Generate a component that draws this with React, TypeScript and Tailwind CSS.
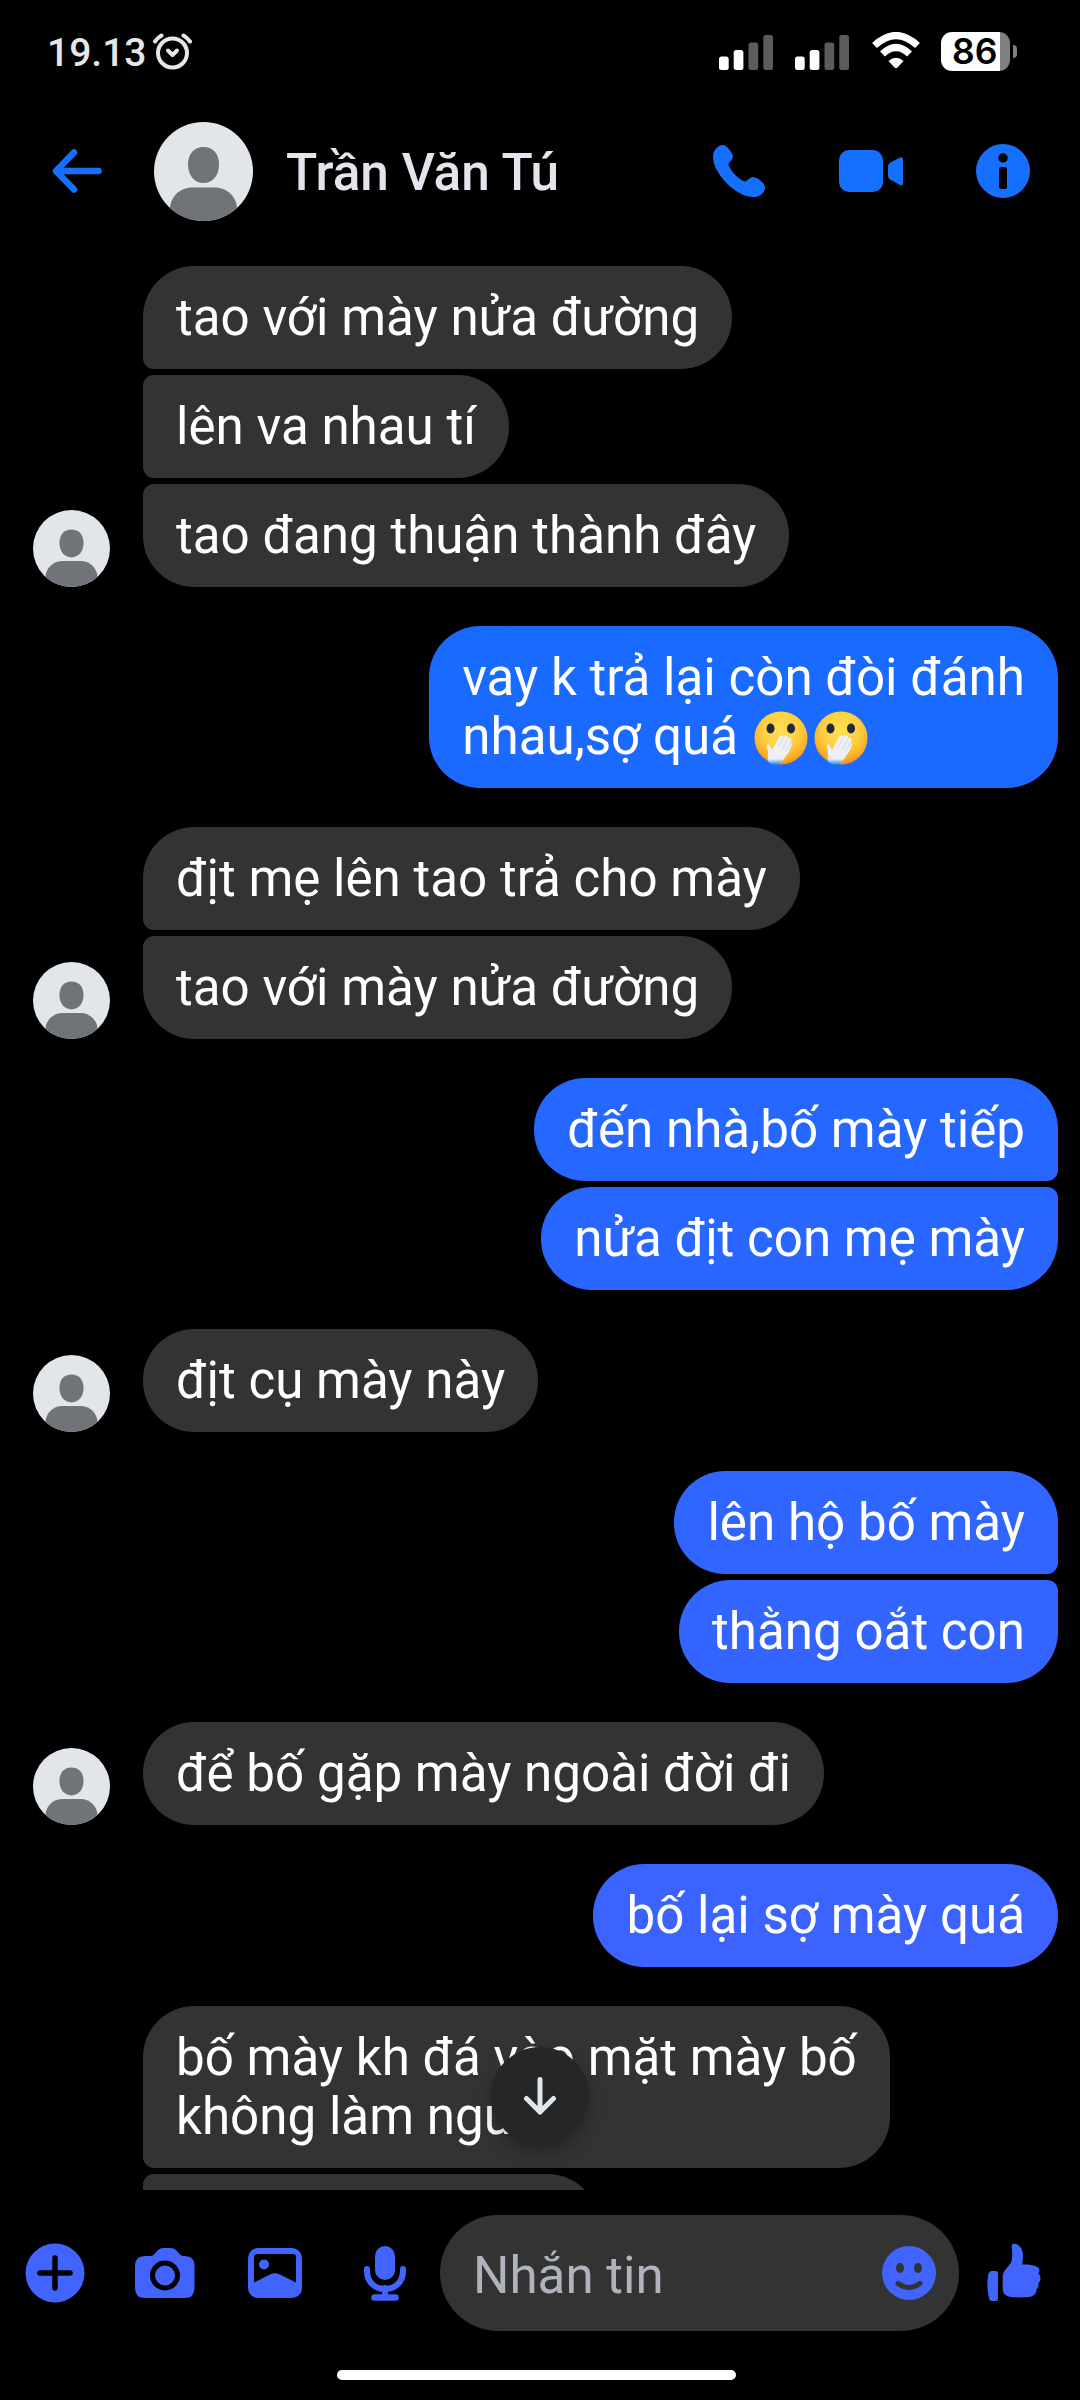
import type { ReactNode } from "react";

type Message = { lines: ReactNode[] };
type Group = { mine: boolean; messages: Message[] };

function FaceEmoji() {
  return (
    <svg viewBox="0 0 60 60" className="mt-px h-[60px] w-[60px] shrink-0">
      <defs>
        <radialGradient id="face" cx="0.5" cy="0.35" r="0.68">
          <stop offset="0" stopColor="#ffe052" />
          <stop offset="0.5" stopColor="#fed040" />
          <stop offset="0.8" stopColor="#fbb02a" />
          <stop offset="1" stopColor="#fb7d0e" />
        </radialGradient>
        <linearGradient id="cuff" x1="0" y1="0" x2="0" y2="1">
          <stop offset="0.8" stopColor="#eff0f5" />
          <stop offset="1" stopColor="#1b8be0" />
        </linearGradient>
      </defs>
      <circle cx="30" cy="30" r="26.5" fill="url(#face)" />
      <ellipse cx="19.5" cy="20.5" rx="4" ry="4.900" fill="#26263a" />
      <ellipse cx="40" cy="20.5" rx="4" ry="4.900" fill="#26263a" />
      <path
        d="M17 53C16 48 18 46 16.500 41 14.500 37 17 34.500 19 38l2 4 7-13c1.500-3 4.500-2 4 1l1-1.500c2-2.500 5-.5 3.500 2.500l1-1c2.500-1 3.500 1 2.500 4 1 1 1 3 0 5-2 7-6 9-8 14-3 5-12 5-15 0z"
        fill="url(#cuff)"
      />
      <path d="M32 30l-4.500 9M36.500 31l-5 10M40 34l-5 9" stroke="#cfd2dc" strokeWidth="0.8" fill="none" />
    </svg>
  );
}

const groups: Group[] = [
  {
    mine: false,
    messages: [
      { lines: ["tao với mày nửa đường"] },
      { lines: ["lên va nhau tí"] },
      { lines: ["tao đang thuận thành đây"] },
    ],
  },
  {
    mine: true,
    messages: [
      {
        lines: [
          "vay k trả lại còn đòi đánh",
          <span className="flex">
            <span className="mr-[13px]">nhau,sợ quá</span>
            <FaceEmoji />
            <FaceEmoji />
          </span>,
        ],
      },
    ],
  },
  {
    mine: false,
    messages: [{ lines: ["địt mẹ lên tao trả cho mày"] }, { lines: ["tao với mày nửa đường"] }],
  },
  {
    mine: true,
    messages: [{ lines: ["đến nhà,bố mày tiếp"] }, { lines: ["nửa địt con mẹ mày"] }],
  },
  { mine: false, messages: [{ lines: ["địt cụ mày này"] }] },
  { mine: true, messages: [{ lines: ["lên hộ bố mày"] }, { lines: ["thằng oắt con"] }] },
  { mine: false, messages: [{ lines: ["để bố gặp mày ngoài đời đi"] }] },
  { mine: true, messages: [{ lines: ["bố lại sợ mày quá"] }] },
];

function Avatar({ className }: { className: string }) {
  return (
    <svg viewBox="0 0 99 99" className={`shrink-0 rounded-full ${className}`}>
      <rect width="99" height="99" fill="#e2e5ea" />
      <path d="M49.500 25c9.500 0 15.500 6.500 15.500 17.500S58.500 61 49.500 61 34 53.500 34 42.500 40 25 49.500 25z" fill="#707479" />
      <path d="M16 99V87c0-12 10-21.500 22-21.500h23c12 0 22 9.500 22 21.500v12z" fill="#707479" />
    </svg>
  );
}

function SignalBars() {
  return (
    <svg viewBox="0 0 54 35" className="h-[35px] w-[54px]">
      <rect x="0" y="21.500" width="9.700" height="13.500" rx="2.500" fill="#fff" />
      <rect x="14.700" y="15" width="9.700" height="20" rx="2.500" fill="#fff" />
      <rect x="29.500" y="7.500" width="9.700" height="27.500" rx="2.500" fill="#5c5c5c" />
      <rect x="44.300" y="0" width="9.700" height="35" rx="2.500" fill="#5c5c5c" />
    </svg>
  );
}

function StatusBar() {
  return (
    <div className="flex h-[104px] items-start pl-[47px] pr-[63px] pt-[32px]">
      <span className="w-[105px] pt-[1px] text-[39px] font-medium leading-[40px] text-[#e6e6e6]">19.13</span>
      <svg viewBox="0 0 40 38" className="mt-[1px] h-[38px] w-[40px]" fill="none" stroke="#e6e6e6" strokeLinecap="round">
        <circle cx="20.500" cy="20" r="14.500" strokeWidth="4" />
        <path d="M3 8.500Q6 4.500 9.500 2.500M38 8.500Q35 4.500 31.500 2.500" strokeWidth="4" />
        <path d="M16 17.500l4.500 4.500 4.500-4.500" strokeWidth="4" strokeLinejoin="round" />
      </svg>
      <div className="ml-auto flex items-start">
        <div className="mt-[3px] flex gap-[22px]">
          <SignalBars />
          <SignalBars />
        </div>
        <svg viewBox="0 0 50 38" className="ml-[22px] h-[38px] w-[50px]" fill="none" stroke="#fff">
          <path d="M3.500 13.500Q25-6.500 46.500 13.500" strokeWidth="7" />
          <path d="M11.500 22Q25 9 38.500 22" strokeWidth="7" />
          <path d="M17.500 29Q25 22.500 32.500 29L26.500 35.500Q25 37 23.500 35.500z" fill="#fff" stroke="none" />
        </svg>
        <div className="ml-5 flex items-center">
          <div className="h-[39px] w-[69px] rounded-[11px] bg-[linear-gradient(to_right,#fff_59px,#808080_59px)] pl-[11px] font-[Inter] text-[35.500px] font-semibold leading-[39px] text-black">
            86
          </div>
          <div className="ml-[3px] h-[13px] w-1 rounded-r-full bg-[#808080]" />
        </div>
      </div>
    </div>
  );
}

function Header() {
  return (
    <header className="flex h-[134px] items-center pl-[51px] pr-[50px] text-[#156fff]">
      <svg viewBox="0 0 52 46" className="h-[46px] w-[52px]" fill="none" stroke="currentColor" strokeWidth="6.500" strokeLinecap="round" strokeLinejoin="round">
        <path d="M23 4.500L5 23l18 18.500M6 23h41.500" />
      </svg>
      <Avatar className="ml-[51px] h-[99px] w-[99px]" />
      <h1 className="ml-[33px] mt-1 text-[51.300px] font-medium leading-none text-[#e2e5eb]">Trần Văn Tú</h1>
      <svg viewBox="0 0 54 54" className="ml-auto h-[54px] w-[54px]" fill="currentColor">
        <path d="M10.500 1C15 1 20.500 9 21 12.500c0 3.500-5 6-4.500 8.500 2.500 6.500 10 14 16 16.500 3 0 4.500-4.500 8.500-4.500 4 0 12 6 12 10.500 0 5.500-5.500 9.500-12 9.500C24 53 1 29 1 13 1 6 6 1 10.500 1z" />
      </svg>
      <svg viewBox="0 0 66 44" className="ml-[73px] h-[44px] w-[66px]" fill="currentColor">
        <rect x="0" y="1" width="44" height="42" rx="10" />
        <path d="M49 17.500q0-2.500 2-3.700l10-5.300q3-1 3 2v23.500q0 3-3 2l-10-5.500q-2-1.200-2-3.700z" />
      </svg>
      <svg viewBox="0 0 54 54" className="ml-[71px] h-[54px] w-[54px]">
        <circle cx="27" cy="27" r="27" fill="currentColor" />
        <circle cx="27" cy="14" r="4.700" fill="#000" />
        <rect x="23" y="23" width="8" height="22" rx="2.500" fill="#000" />
      </svg>
    </header>
  );
}

function bubbleCorners(mine: boolean, first: boolean, last: boolean) {
  if (mine) return `${first ? "" : "rounded-tr-[11px]"} ${last ? "" : "rounded-br-[11px]"}`;
  return `${first ? "" : "rounded-tl-[11px]"} ${last ? "" : "rounded-bl-[11px]"}`;
}

function Bubble({ mine, first, last, children }: { mine: boolean; first: boolean; last: boolean; children: ReactNode }) {
  // fixed background, so the blue shifts down the screen from bubble to bubble
  const color = mine ? "bg-[linear-gradient(to_bottom,#076eff,#4860ff)] bg-fixed" : "bg-[#333333]";
  return (
    <div className={`w-fit rounded-[51px] px-[33px] py-[22px] text-white ${color} ${bubbleCorners(mine, first, last)}`}>
      {children}
    </div>
  );
}

function MessageGroup({ group }: { group: Group }) {
  const { mine, messages } = group;
  return (
    <div className={`flex items-end ${mine ? "justify-end pr-[22px]" : "pl-[33px]"}`}>
      {!mine && <Avatar className="mr-[33px] h-[77px] w-[77px]" />}
      <div className={`flex flex-col gap-1.5 ${mine ? "items-end" : "items-start"}`}>
        {messages.map((message, i) => (
          <Bubble key={i} mine={mine} first={i === 0} last={i === messages.length - 1}>
            {message.lines.map((line, j) => (
              <div key={j} className="h-[59px] whitespace-nowrap">
                {line}
              </div>
            ))}
          </Bubble>
        ))}
      </div>
    </div>
  );
}

function Composer() {
  return (
    <footer className="flex h-[166px] items-center pl-[25px] pr-[38px] text-[#4164ff]">
      <svg viewBox="0 0 60 60" className="h-[60px] w-[60px]">
        <circle cx="30" cy="30" r="29.500" fill="currentColor" />
        <path d="M30 15v30M15 30h30" stroke="#000" strokeWidth="5.500" strokeLinecap="round" />
      </svg>
      <svg viewBox="0 0 60 60" className="ml-[50px] h-[60px] w-[60px]">
        <path d="M10 13h5q3 0 5-2.500l2.500-3Q24.500 5 28 5h8q3.500 0 5.500 2.500l2.500 3q2 2.500 5 2.500h1q9.500 0 9.500 10v22q0 10-9.500 10H10Q0 55 0 45V23q0-10 10-10z" fill="currentColor" />
        <circle cx="30" cy="32.500" r="12.500" fill="none" stroke="#000" strokeWidth="5" />
      </svg>
      <svg viewBox="0 0 56 50" className="ml-[53px] h-[50px] w-[56px]">
        <rect x="0" y="0" width="54" height="50" rx="10" fill="currentColor" />
        <path d="M6 9q0-3 3-3h36q3 0 3 3v25.500L32 26.500q-5-2.500-10 0L6 34.500z" fill="#000" />
        <circle cx="16" cy="16.500" r="5" fill="currentColor" />
      </svg>
      <svg viewBox="0 0 44 58" className="ml-[59px] h-[58px] w-[44px]" fill="none" stroke="currentColor" strokeLinecap="round">
        <rect x="12" y="2" width="20" height="34" rx="10" fill="currentColor" stroke="none" />
        <path d="M4 25v2c0 24 36 24 36 0v-2M22 44v8" strokeWidth="6" />
        <path d="M11.500 53.500h21" strokeWidth="6.500" />
      </svg>
      <div className="ml-[33px] flex h-[116px] w-[519px] items-center rounded-full bg-[#333333] pl-[33px] pr-[22px]">
        <span className="mt-[5px] text-[51.100px] leading-none text-[#afb3bb]">Nhắn tin</span>
        <svg viewBox="0 0 56 56" className="ml-auto h-[56px] w-[56px]">
          <circle cx="28" cy="28" r="27" fill="currentColor" />
          <ellipse cx="19" cy="23" rx="4" ry="5" fill="#333" />
          <ellipse cx="37" cy="23" rx="4" ry="5" fill="#333" />
          <path d="M17 38.500q11 8 22 0" fill="none" stroke="#333" strokeWidth="5" strokeLinecap="round" />
        </svg>
      </div>
      <svg viewBox="0 0 56 60" className="ml-auto h-[60px] w-[56px]" fill="currentColor">
        <path d="M2.500 30.500q.8-2.500 3-2.500H10q2 0 2 2v26q0 2-2 2H6q-2.200 0-3-2.500-3-12.500-.5-25z" />
        <path d="M25.700 4Q25 .7 28.500.7C33.500 1 37 6.500 37 12c0 4-.7 6-.5 9.500C44 21.300 53.500 22.500 53.500 27q0 2-1 3.500c2.500 2.500 3 6.500-.2 10 .6 2.500-.3 4.500-1.800 6 0 4.500-3 7-8 7.500q-9 .8-18 0-7.800-1-7.800-8.500V33c0-6.500 8.800-10.500 9.300-17 .3-5 .4-8-.3-12z" />
      </svg>
    </footer>
  );
}

export default function App() {
  return (
    <div className="flex h-[2400px] w-[1080px] flex-col overflow-hidden bg-black font-[Roboto,sans-serif]">
      <StatusBar />
      <Header />
      <main className="relative flex h-[1952px] flex-col gap-[39px] overflow-hidden pt-[28px] text-[51.150px] leading-[59px]">
        {groups.map((group, i) => (
          <MessageGroup key={i} group={group} />
        ))}
        <div className="ml-[143px] flex flex-col items-start gap-1.5">
          <Bubble mine={false} first last={false}>
            <div>bố mày kh đá vào mặt mày bố</div>
            <div>không làm người</div>
          </Bubble>
          <div className="h-[103px] w-[456px] rounded-[51px] rounded-tl-[11px] bg-[#333333]" />
        </div>
        <button className="absolute left-[491px] top-[1809px] flex h-[98px] w-[98px] items-center justify-center rounded-full bg-[#242628] shadow-[0_8px_16px_rgba(0,0,0,0.25)]">
          <svg viewBox="0 0 34 40" className="h-[40px] w-[34px]" fill="none" stroke="#e2e5ea" strokeWidth="5" strokeLinecap="round" strokeLinejoin="round">
            <path d="M17 3.500v32.500M3.500 22.500L17 36l13.500-13.500" />
          </svg>
        </button>
      </main>
      <Composer />
      <div className="ml-[337px] mt-[14px] h-2.5 w-[399px] rounded-full bg-white" />
    </div>
  );
}
